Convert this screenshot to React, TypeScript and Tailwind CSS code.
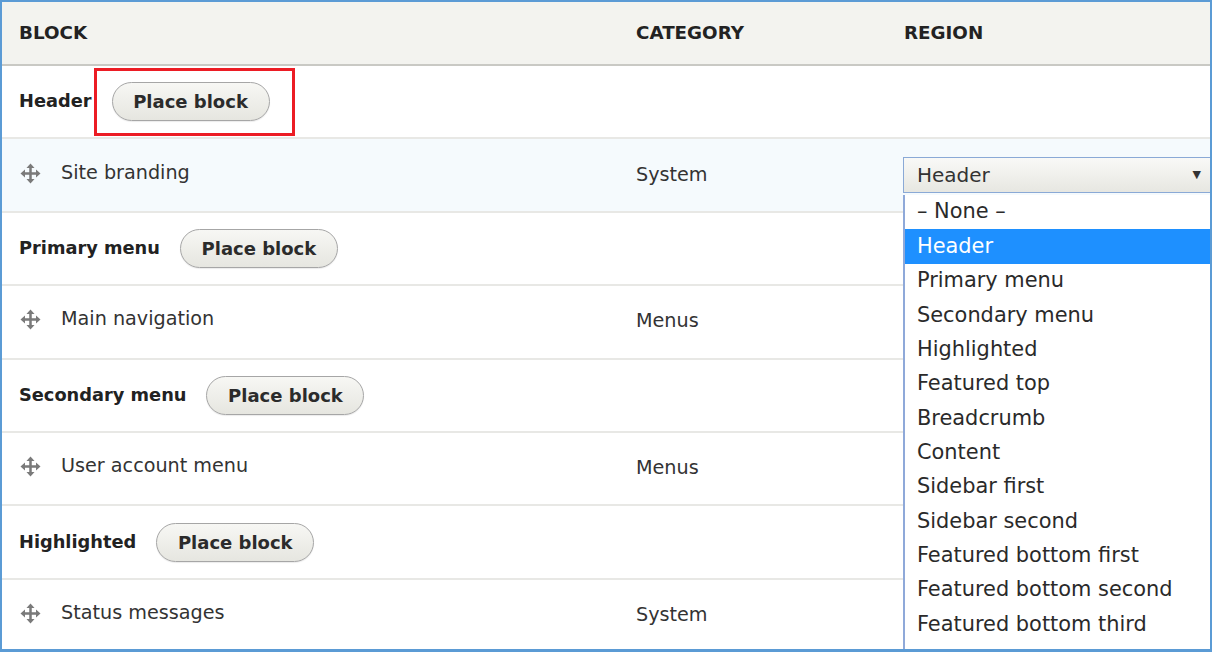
import React from 'react';

type Row =
  | { kind: 'region'; title: string; highlight?: boolean }
  | { kind: 'block'; title: string; category: string; active?: boolean };

const rows: Row[] = [
  { kind: 'region', title: 'Header', highlight: true },
  { kind: 'block', title: 'Site branding', category: 'System', active: true },
  { kind: 'region', title: 'Primary menu' },
  { kind: 'block', title: 'Main navigation', category: 'Menus' },
  { kind: 'region', title: 'Secondary menu' },
  { kind: 'block', title: 'User account menu', category: 'Menus' },
  { kind: 'region', title: 'Highlighted' },
  { kind: 'block', title: 'Status messages', category: 'System' },
];

const regionOptions: string[] = [
  '– None –',
  'Header',
  'Primary menu',
  'Secondary menu',
  'Highlighted',
  'Featured top',
  'Breadcrumb',
  'Content',
  'Sidebar first',
  'Sidebar second',
  'Featured bottom first',
  'Featured bottom second',
  'Featured bottom third',
  'Footer first',
];

const DragHandle: React.FC = () => (
  <svg width="21" height="21" viewBox="0 0 21 21" className="shrink-0">
    <g fill="#7a7a7a">
      <rect x="9.25" y="4" width="2.5" height="13" />
      <rect x="4" y="9.25" width="13" height="2.5" />
      <polygon points="10.5,0.5 14.5,5 6.5,5" />
      <polygon points="10.5,20.5 14.5,16 6.5,16" />
      <polygon points="0.5,10.5 5,6.5 5,14.5" />
      <polygon points="20.5,10.5 16,6.5 16,14.5" />
    </g>
  </svg>
);

const PlaceBlockButton: React.FC = () => (
  <button className="h-[39px] w-[158px] rounded-full border border-[#a6a6a6] bg-linear-to-b from-[#f7f7f4] to-[#e6e6e0] text-[18px] font-bold text-[#2b2b2b] shadow-[0_1px_1px_rgba(0,0,0,0.08)]">
    Place block
  </button>
);

const App: React.FC = () => {
  return (
    <div
      className="relative h-[652px] w-[1212px] overflow-hidden border-2 border-b-[3px] border-[#5b9bd5] bg-white text-[#333]"
      style={{ fontFamily: '"DejaVu Sans", Verdana, sans-serif' }}
    >
      {/* table head */}
      <div className="flex h-[64px] items-center border-b-2 border-[#c9c9c4] bg-[#f3f3ef] text-[18.3px] font-bold uppercase text-[#222]">
        <div className="w-[634px] shrink-0 pl-[17px]">Block</div>
        <div className="w-[268px] shrink-0">Category</div>
        <div className="flex-1">Region</div>
      </div>

      {rows.map((row) =>
        row.kind === 'region' ? (
          <div
            key={row.title}
            className="flex h-[73.4px] items-center gap-5 border-b-2 border-[#e8e8e5] pl-[17px]"
          >
            <span className="text-[17.8px] font-bold text-[#222]">{row.title}</span>
            <div className="relative">
              <PlaceBlockButton />
              {row.highlight && (
                <div className="absolute -left-[18px] -top-[14px] h-[68px] w-[201px] border-[3px] border-[#ec1c24]" />
              )}
            </div>
          </div>
        ) : (
          <div
            key={row.title}
            className={`flex h-[73.4px] items-center border-b-2 border-[#e8e8e5] text-[19.2px] ${
              row.active ? 'bg-[#f5fafd]' : 'bg-white'
            }`}
          >
            <div className="-mt-[4px] flex w-[634px] shrink-0 items-center gap-5 pl-[18px]">
              <DragHandle />
              <span>{row.title}</span>
            </div>
            <div className="w-[267px] shrink-0">{row.category}</div>
            {row.active && (
              <div className="flex h-[36px] w-[315px] shrink-0 items-center justify-between border border-[#8aa9d6] bg-linear-to-b from-[#f9f9f7] to-[#e7e7e1] pl-[13px] pr-[16px] text-[20px]">
                <span>Header</span>
                <span className="text-[11px] text-[#333]">▼</span>
              </div>
            )}
          </div>
        )
      )}

      {/* open region dropdown */}
      <div className="absolute left-[901px] top-[193px] w-[320px] border-l-2 border-[#8fa9d9] bg-white text-[20.9px] text-[#2a2a2a]">
        {regionOptions.map((opt) => (
          <div
            key={opt}
            className={`flex h-[34.35px] items-center pl-[12px] ${
              opt === 'Header' ? 'bg-[#1e90ff] text-white' : ''
            }`}
          >
            {opt}
          </div>
        ))}
      </div>
    </div>
  );
};

export default App;
